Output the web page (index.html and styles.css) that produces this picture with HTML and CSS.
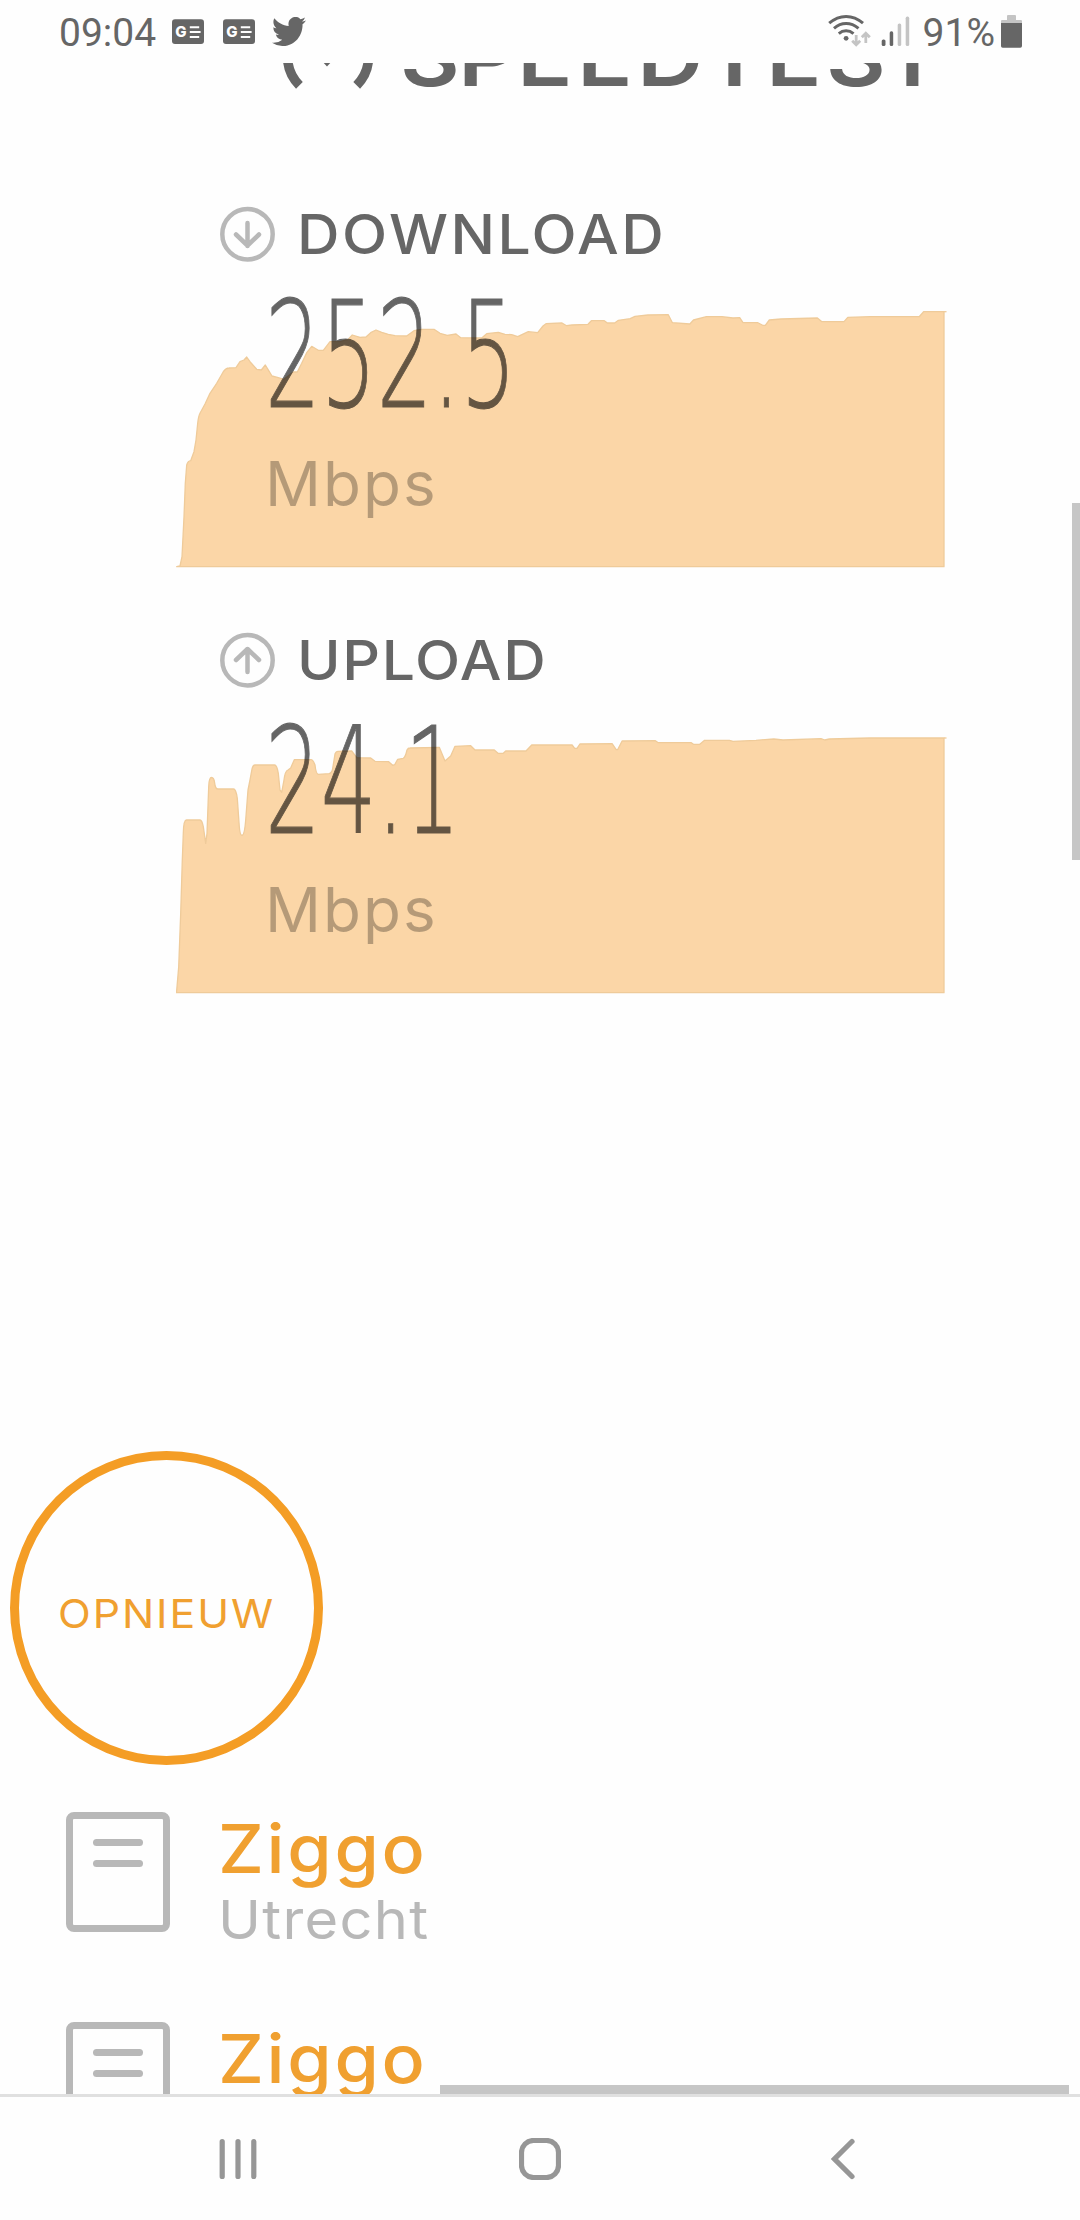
FILE: index.html
```
<!DOCTYPE html>
<html lang="nl">
<head>
    <meta charset="UTF-8">
    <meta name="viewport" content="width=device-width, initial-scale=1.0">
    <title>Speedtest</title>
    <link rel="stylesheet" href="styles.css">
</head>
<body>
    <!-- Status Bar -->
    <header class="status-bar">
        <div class="status-left">
            <span class="time">09:04</span>
            <svg class="news-icon" width="32" height="34" viewBox="0 0 32 34">
                <rect y="5.3" width="32" height="24.7" rx="3" fill="#666"/>
                <text x="3.2" y="23" class="news-letter">G</text>
                <path d="M17.8 13.2h9.4M17.8 18h10.8M17.8 22.9h9.4" stroke="#fefefe" stroke-width="2"/>
            </svg>
            <svg class="news-icon" width="32" height="34" viewBox="0 0 32 34">
                <rect y="5.3" width="32" height="24.7" rx="3" fill="#666"/>
                <text x="3.2" y="23" class="news-letter">G</text>
                <path d="M17.8 13.2h9.4M17.8 18h10.8M17.8 22.9h9.4" stroke="#fefefe" stroke-width="2"/>
            </svg>
            <svg class="bird-icon" width="34" height="29" viewBox="0 2.25 24 19.5" preserveAspectRatio="none">
                <path fill="#666" d="M23.953 4.57a10 10 0 01-2.825.775 4.958 4.958 0 002.163-2.723c-.951.555-2.005.959-3.127 1.184a4.92 4.92 0 00-8.384 4.482C7.69 8.095 4.067 6.13 1.64 3.162a4.822 4.822 0 00-.666 2.475c0 1.71.87 3.213 2.188 4.096a4.904 4.904 0 01-2.228-.616v.06a4.923 4.923 0 003.946 4.827 4.996 4.996 0 01-2.212.085 4.936 4.936 0 004.604 3.417 9.867 9.867 0 01-6.102 2.105c-.39 0-.779-.023-1.17-.067a13.995 13.995 0 007.557 2.209c9.053 0 13.998-7.496 13.998-13.985 0-.21 0-.42-.015-.63A9.935 9.935 0 0024 4.59z"/>
            </svg>
        </div>
        <div class="status-right">
            <svg class="wifi-icon" width="44" height="34" viewBox="0 0 44 34" fill="none">
                <path d="M1.2 9.2Q9 2.4 18.1 2.4T35 9.2M6 14.4Q11.5 9.6 18.1 9.6T30.5 14.4M10.8 19.6Q14 16.8 18.1 16.8T25.5 19.6" stroke="#666" stroke-width="3"/>
                <circle cx="18.1" cy="24.3" r="2.4" fill="#666"/>
                <path d="M28.2 21v9.5M24.2 26.7l4 4 4-4M37.8 29v-9.5M33.8 23.3l4-4 4 4" stroke="#c4c4c4" stroke-width="2.8"/>
            </svg>
            <svg class="signal-icon" width="29" height="34" viewBox="0 0 29 34">
                <rect x="0.7" y="25.5" width="3.8" height="6.5" rx="1.6" fill="#666"/>
                <rect x="8.7" y="17.3" width="3.5" height="14.7" rx="1.6" fill="#666"/>
                <rect x="16.7" y="9.5" width="3.5" height="22.5" rx="1.6" fill="#c4c4c4"/>
                <rect x="24.7" y="2.6" width="3.5" height="29.4" rx="1.6" fill="#c4c4c4"/>
            </svg>
            <span class="battery-text">91%</span>
            <svg class="battery-icon" width="21" height="34" viewBox="0 0 21 34">
                <path d="M6 2a1 1 0 0 1 1-1h7a1 1 0 0 1 1 1v4h5a1 1 0 0 1 1 1v3H0V7a1 1 0 0 1 1-1h5z" fill="#c4c4c4"/>
                <path d="M0 9h21v23a1.7 1.7 0 0 1-1.7 1.7H1.7A1.7 1.7 0 0 1 0 32z" fill="#666"/>
            </svg>
        </div>
    </header>

    <main class="page">
        <!-- Logo, scrolled partly under the status bar -->
        <svg class="logo" width="1080" height="40" viewBox="0 0 1080 40">
            <path d="M299.4 22.3A40.5 40.5 0 1 1 356.700 22.3" fill="none" stroke="#666" stroke-width="9.5"/>
            <path d="M320 -4l7 7.5 7-7.5z" fill="#666"/>
            <text class="logo-text" transform="scale(1.15 1)" x="347.8 398.3 449.6 501.7 553.9 612.2 666.1 718.3 767" y="23">SPEEDTEST</text>
        </svg>

        <!-- Download -->
        <section class="result">
            <div class="result-head">
                <svg width="55" height="56" viewBox="0 0 55 56" class="arrow-icon">
                    <circle cx="27.5" cy="28.2" r="25.2"/>
                    <path d="M27.5 17v23M16 28.5l11.5 11 11.5-11"/>
                </svg>
                <h2>DOWNLOAD</h2>
            </div>
            <div class="result-body">
                <svg class="chart" width="776" height="270" viewBox="0 0 776 270">
                    <path d="M0.7 266.7L4 266 6 256.7 8 216.7 9.3 183.3 10.7 165Q12 161 14.7 160.7L18 151.7 20 140 21.7 123.3Q22.5 116 24 113.3L29 104 34 93.3 40.7 83.3 47.3 71.7Q50 68 53 68L60 67.7 64 61.7 68 60 70.7 57 74 61.7 80.7 69.3 85.3 70 89.3 65 92.7 70.7 96 76 102.3 77.7 108 79.3 117.3 72 121.3 72 125.7 63.3 130.7 52.7 135.7 46.3 142.3 50.3 147.3 50.3 154 41.7 164 41.7 172.3 39.3 176.3 35 184 37.3 190 37 194.7 32.7 200 30 205.7 32.3 212.3 34.3 219 35.7 230.7 36 238 30.7 245.7 29.3 258 29.3 264 33.3 271.3 35.3 280 34 284.7 37.7 305.7 38 310.7 33.7 322.3 32.3 329 34.3 335.7 34.7 341.7 36.7 352.3 31.7 361.7 32.7 367 26 370 23.7 386 23 390.6 25.7 396 25 412 24.3 415.4 20.7 428.3 20.7 431.3 23 438.7 23 442.4 20.3 454.2 18.7 459 16.3 472 15 492.3 14.7 496.4 22.7 513.8 24 517.5 20 530.4 16.7 546 16.7 557 18 563.7 17.7 567 22.7 581.9 22.7 586.7 25.3 589.3 25.3 593.3 20 605 19 641.4 18 645.9 21.7 668 21.7 671.8 17.3 694 16.7 743.2 16.7 747.6 11.7 768 11.7V266.7z"/>
                    <path d="M768 11.7h2.5"/>
                </svg>
                <div class="reading">
                    <p class="speed">252.5</p>
                    <p class="unit">Mbps</p>
                </div>
            </div>
        </section>

        <!-- Upload -->
        <section class="result upload">
            <div class="result-head">
                <svg width="55" height="56" viewBox="0 0 55 56" class="arrow-icon">
                    <circle cx="27.5" cy="28.2" r="25.2"/>
                    <path d="M27.5 40V17M16 28l11.5-11 11.5 11"/>
                </svg>
                <h2>UPLOAD</h2>
            </div>
            <div class="result-body">
                <svg class="chart" width="776" height="270" viewBox="0 0 776 270">
                    <path d="M0.5 266.7L2.7 240.7 4.7 187.3 6.3 134 7.3 107.3Q7.5 94 10.5 94H24Q26 94 27.3 100.7L29.7 117.3 31 107.3 32.7 60.7Q33 51.5 35.5 51.5T38.7 57.3 42 63H57.5Q60 63 61.3 72.3L63.3 100.7Q64 109.3 66 109.3 68.5 109.3 69.7 94L72 64 74 54 76 43Q77 39 79 39H98.5Q101 39 102.3 47.3L104 64 105.7 66.3 108 54Q109 45 112 44L114.7 42 118.3 33.7H135Q137 33.7 139 39 140 48.3 142.5 48.3L153 47.7Q156 47 156.7 42.3L159 28Q160 25.3 162 25.3L175.7 25 180.7 31.7 194.7 32 199 35.3 212.7 35.7 216.7 39.3 218.7 38.7 221.7 33.3 227.3 32.3Q229.5 31 231 24 232 22 234 22L263.3 21.3 269 35 274.7 30 279 20.3 294.7 19.7 299 24 318.3 24 322 27.3 327.3 27.3 329.7 25 350 25 355.7 19 396.1 19 398.7 22.3 401 22.3 403.9 18 436.1 17.7 440.2 23.7 441.6 23.7 446.1 15 479.4 14.7 482.3 16.7 515.3 16.7 517.5 18.3 523.8 18.3 528.6 14.3 553.4 14.3 557 15.3 580 14.3 597.8 13 607 14 645 12.7 648.8 14 653.3 13 694 12 768 12V266.7z"/>
                    <path d="M768 12h2.5"/>
                </svg>
                <div class="reading">
                    <p class="speed">24.1</p>
                    <p class="unit">Mbps</p>
                </div>
            </div>
        </section>

        <button class="again"><span>OPNIEUW</span></button>

        <!-- Provider and server -->
        <ul class="info-list">
            <li>
                <div class="card-icon"><i></i><i></i></div>
                <div>
                    <p class="name">Ziggo</p>
                    <p class="place">Utrecht</p>
                </div>
            </li>
            <li>
                <div class="card-icon"><i></i><i></i></div>
                <div>
                    <p class="name">Ziggo</p>
                </div>
            </li>
        </ul>

        <div class="scroll-y"></div>
        <div class="scroll-x"></div>
    </main>

    <!-- Navigation Bar -->
    <nav class="nav-bar">
        <svg width="38" height="42" viewBox="0 0 38 42">
            <path d="M3.2 3.5v35M19 3.5v35M34.8 3.5v35"/>
        </svg>
        <svg class="home" width="42" height="42" viewBox="0 0 42 42">
            <rect x="2.5" y="2.5" width="37" height="37" rx="12"/>
        </svg>
        <svg width="24" height="42" viewBox="0 0 24 42">
            <path d="M21 3.5L3.5 21 21 38.5"/>
        </svg>
    </nav>
</body>
</html>
```
FILE: styles.css
```
/* Basic Reset */
* {
    box-sizing: border-box;
    margin: 0;
    padding: 0;
}

body {
    width: 1080px;
    height: 2220px;
    display: flex;
    flex-direction: column;
    overflow: hidden;
    background: #fefefe;
    font-family: Inter, sans-serif;
    color: #666;
}

svg {
    display: block;
    flex-shrink: 0;
}

/* Status Bar */
.status-bar {
    height: 63px;
    padding: 14px 58px 0 59px;
    display: flex;
    justify-content: space-between;
    font-family: Roboto, sans-serif;
    font-size: 39px;
    line-height: 39px;
}

.status-left,
.status-right {
    display: flex;
    align-items: flex-start;
}

.news-icon {
    margin-left: 16px;
}

.news-icon + .news-icon {
    margin-left: 19px;
}

.news-letter {
    font: 800 15px Inter, sans-serif;
    fill: #fefefe;
}

.bird-icon {
    margin: 3px 0 0 17px;
}

.signal-icon {
    margin: 0 13px 0 9px;
}

.battery-icon {
    margin-left: 6px;
}

/* Page */
.page {
    position: relative;
    height: 2031px;
    overflow: hidden;
}

.logo {
    margin-bottom: 103px;
}

.logo-text {
    font-size: 80px;
    font-weight: 600;
    fill: #666;
}

/* Results */
.result {
    height: 426px;
}

.result-head {
    display: flex;
    align-items: center;
    gap: 22px;
    height: 56px;
    padding-left: 219.5px;
}

.result-head h2 {
    font-size: 55px;
    font-weight: 500;
    line-height: 58px;
    letter-spacing: 2.3px;
    transform: scaleX(1.07);
    transform-origin: left;
}

.upload .result-head h2 {
    letter-spacing: 1.6px;
}

.arrow-icon {
    fill: none;
    stroke: #b8b8b8;
    stroke-width: 4.5px;
    stroke-linecap: round;
    stroke-linejoin: round;
}

.result-body {
    display: grid;
}

.chart,
.reading {
    grid-area: 1 / 1;
}

.chart {
    margin: 38px 0 0 176px;
    fill: #fbd6a7;
    stroke: #efcb9a;
    stroke-width: 1.3px;
    stroke-linejoin: round;
}

.reading {
    z-index: 1;
    padding: 34px 0 0 265px;
}

.speed {
    width: 450px;
    font-family: "DejaVu Sans", sans-serif;
    font-size: 148px;
    font-weight: 200;
    line-height: 120px;
    color: #000;
    -webkit-text-stroke: 1.2px #000;
    opacity: 0.6;
    transform: scaleX(0.593);
    transform-origin: left;
}

.unit {
    margin-top: 32.5px;
    font-size: 62px;
    line-height: 70px;
    letter-spacing: 2px;
    color: rgba(0, 0, 0, 0.28);
}

/* Again Button */
.again {
    display: block;
    width: 313px;
    height: 314px;
    margin: 392.5px 0 0 9.5px;
    padding-top: 12px;
    border: 9px solid #f49d25;
    border-radius: 50%;
    background: none;
    font-family: inherit;
    font-size: 40px;
    letter-spacing: 1.8px;
    color: #f0a030;
}

.again span {
    display: block;
    transform: scaleX(1.07);
}

/* Info List */
.info-list {
    display: grid;
    gap: 90px;
    margin: 47px 0 0 66px;
    list-style: none;
}

.info-list li {
    display: flex;
    gap: 48px;
    height: 120px;
}

.card-icon {
    width: 104px;
    height: 120px;
    padding-top: 20px;
    display: flex;
    flex-direction: column;
    align-items: center;
    gap: 14px;
    border: 7.5px solid #b8b8b8;
    border-radius: 8px;
}

.card-icon i {
    width: 50px;
    height: 7px;
    border-radius: 4px;
    background: #b8b8b8;
}

.name,
.place {
    transform: scaleX(1.07);
    transform-origin: left;
}

.name {
    font-size: 67px;
    font-weight: 450;
    line-height: 73px;
    letter-spacing: 2.5px;
    color: #f0a030;
}

.place {
    margin-top: 5px;
    font-size: 54px;
    line-height: 60px;
    letter-spacing: 1.2px;
    color: #b8b8b8;
}

/* Scrollbars */
.scroll-y,
.scroll-x {
    position: absolute;
    background: #c6c6c6;
}

.scroll-y {
    top: 440px;
    right: 0;
    width: 8px;
    height: 357px;
}

.scroll-x {
    right: 11px;
    bottom: 0;
    width: 629px;
    height: 9px;
}

/* Navigation Bar */
.nav-bar {
    height: 126px;
    padding: 41px 225.5px 0 219px;
    display: flex;
    justify-content: space-between;
    border-top: 3px solid #e0e0e0;
    background: #fefefe;
}

.nav-bar svg {
    fill: none;
    stroke: #969696;
    stroke-width: 5.2px;
    stroke-linecap: round;
}

.nav-bar .home {
    margin-right: 8px;
}
```
